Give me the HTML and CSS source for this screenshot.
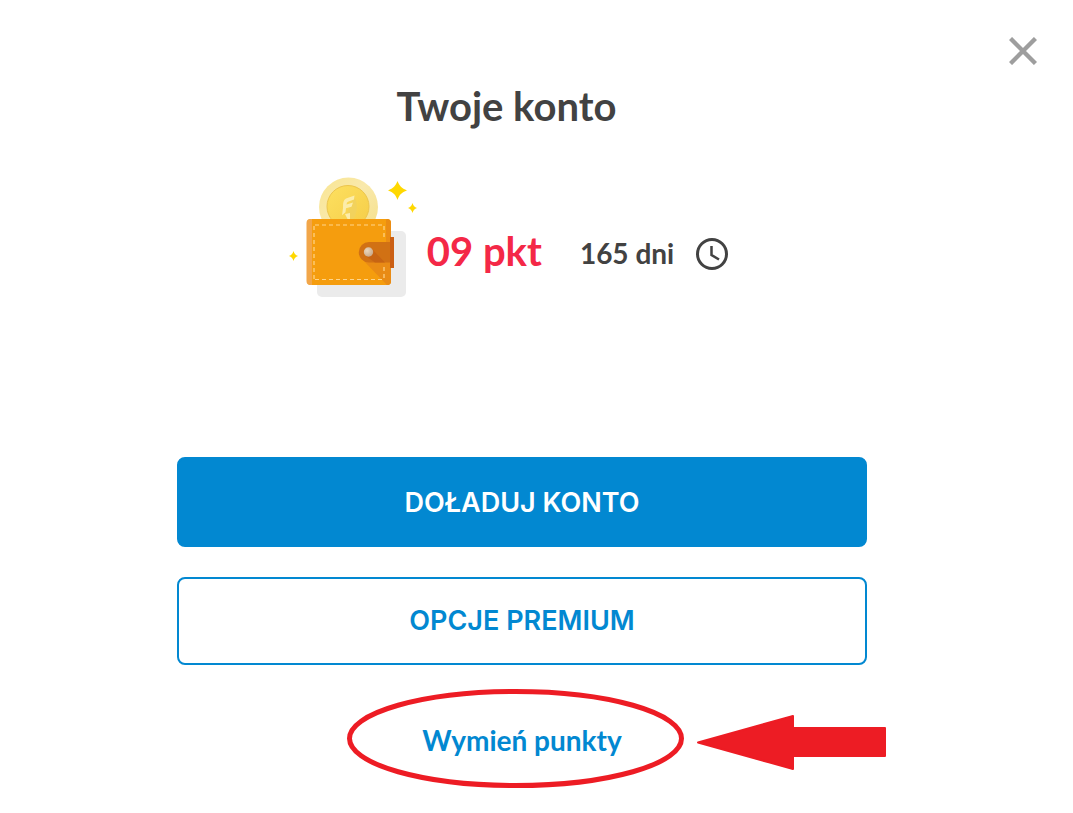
FILE: index.html
```html
<!DOCTYPE html>
<html lang="pl">
<head>
    <meta charset="UTF-8">
    <meta name="viewport" content="width=device-width, initial-scale=1.0">
    <title>Twoje konto</title>
    <link rel="stylesheet" href="styles.css">
</head>
<body>
<div class="account">
    <header class="account-header">
        <h1>Twoje konto</h1>
        <button class="close-btn" type="button" aria-label="Zamknij">
            <svg width="28" height="28" viewBox="0 0 28 28" aria-hidden="true">
                <path d="M1.5 1.5L26.5 26.5M26.5 1.5L1.5 26.5" stroke="#9e9e9e" stroke-width="4.4"/>
            </svg>
        </button>
    </header>
    <main>
        <section class="balance">
            <svg class="wallet" width="128" height="120" viewBox="289 177 128 120" aria-hidden="true">
                <defs>
                    <linearGradient id="rim" x1="0" y1="0" x2="1" y2="1">
                        <stop offset="0" stop-color="#f9e590"/>
                        <stop offset=".45" stop-color="#f9e9ac"/>
                        <stop offset="1" stop-color="#f5df86"/>
                    </linearGradient>
                    <linearGradient id="face" x1="0" y1="0" x2="1" y2="1">
                        <stop offset="0" stop-color="#fde060"/>
                        <stop offset="1" stop-color="#f5cd48"/>
                    </linearGradient>
                    <radialGradient id="stud" cx=".35" cy=".35" r=".75">
                        <stop offset="0" stop-color="#ead7bd"/>
                        <stop offset="1" stop-color="#c7a584"/>
                    </radialGradient>
                </defs>
                <rect x="317" y="231" width="89" height="66" rx="5" fill="#ebebeb"/>
                <!-- coin -->
                <circle cx="348.500" cy="207" r="29.500" fill="url(#rim)"/>
                <circle cx="348" cy="206.500" r="21" fill="url(#face)" stroke="#ecc54c" stroke-width="1"/>
                <path d="M354 196c4 7 4 16-1 24h-5l-1-7z" fill="#f2d25c"/>
                <path d="M343 208q-.5-8 3-9.500l8.500-3-.5 4-5.500 2q-2 .7-2 3l6.500-2-1.500 4.200-5.500 1.600-.5 4-3.500 3z" fill="#fcedaa"/>
                <path d="M345 214l5-1v6h-2.500z" fill="#fcedaa"/>
                <!-- wallet body -->
                <rect x="307" y="219" width="84" height="66" rx="4" fill="#f59d0e"/>
                <path d="M312 219h-1.500a4 4 0 0 0-4 4v58a4 4 0 0 0 4 4h1.500z" fill="#f2a649"/>
                <path d="M387 219a4 4 0 0 1 4 4v58a4 4 0 0 1-4 4l-1-1V220z" fill="#eb8c13"/>
                <path d="M362 259l25 26a4 4 0 0 0 4-4v-19z" fill="#e98b15"/>
                <path d="M315 225h69M315 279.500h69M314 226v53M384 226v14M384 267v12" fill="none" stroke="#ffd58a" stroke-width="1.200" stroke-dasharray="4 3"/>
                <!-- clasp -->
                <path d="M369 242h22v20.500h-22a10.200 10.200 0 0 1 0-20.500z" fill="#d17114"/>
                <path d="M372 249l13 13.500h-10l-10-7z" fill="#c76413"/>
                <rect x="390" y="237" width="4" height="31" fill="#cb5f14"/>
                <circle cx="368.500" cy="252" r="4.700" fill="url(#stud)"/>
                <!-- sparkles -->
                <path d="M397.500 181c2 5 4 7 9.500 9.500-5.500 2-7.500 4-9.500 9.500-2-5.500-4-7.500-9.500-9.500 5.500-2.500 7.500-4.500 9.500-9.500z" fill="#ffd800"/>
                <path d="M412.500 203c1 3 2 4 4.500 5-2.500 1-3.500 2-4.500 5-1-3-2-4-4.500-5 2.500-1 3.500-2 4.500-5z" fill="#ffd800"/>
                <path d="M293.500 251c1 3 2 4 4.500 5-2.500 1-3.500 2-4.500 5-1-3-2-4-4.500-5 2.500-1 3.500-2 4.500-5z" fill="#ffd800"/>
            </svg>
            <strong class="points">09 pkt</strong>
            <span class="days">165 dni</span>
            <svg class="clock" width="32" height="32" viewBox="0 0 32 32" fill="none" stroke="#424242" aria-hidden="true">
                <circle cx="16" cy="16" r="14.500" stroke-width="3"/>
                <path d="M15.500 8v9l7.500 4.500" stroke-width="2.500"/>
            </svg>
        </section>
        <section class="actions">
            <button class="btn btn-primary" type="button">DOŁADUJ KONTO</button>
            <button class="btn btn-outline" type="button">OPCJE PREMIUM</button>
            <div class="exchange">
                <a href="#">Wymień punkty</a>
                <svg class="marker" width="540" height="100" viewBox="347 688 540 100" aria-hidden="true">
                    <ellipse cx="515.500" cy="738.500" rx="166" ry="47" fill="none" stroke="#ed1c24" stroke-width="5"/>
                    <path d="M698 742.500L793 716V728H885V756H793V769z" fill="#ed1c24" stroke="#ed1c24" stroke-width="2" stroke-linejoin="round"/>
                </svg>
            </div>
        </section>
    </main>
</div>
</body>
</html>
```

FILE: styles.css
```css
body {
    margin: 0;
    background-color: #fff;
    color: #424242;
    font-family: Lato, sans-serif;
}
.account {
    min-height: 100vh;
}
.account-header {
    display: flex;
    align-items: flex-start;
    padding: 29px 28px 0 12px;
}
.account-header h1 {
    flex: 1;
    margin: 53px 0 0;
    font-size: 40px;
    line-height: 48px;
    font-weight: 700;
    text-align: center;
}
.close-btn {
    display: flex;
    align-items: center;
    justify-content: center;
    width: 44px;
    height: 44px;
    padding: 0;
    border: none;
    background: none;
    cursor: pointer;
}
.balance {
    display: flex;
    align-items: center;
    justify-content: center;
    margin-top: 47px;
    padding-right: 56px;
}
.wallet {
    flex: none;
}
.points {
    margin: 28px 38px 0 10px;
    color: #f42847;
    font-size: 40px;
    line-height: 48px;
    font-weight: 700;
}
.days {
    margin-top: 32px;
    font-size: 28px;
    line-height: 36px;
    font-weight: 700;
}
.clock {
    margin: 34px 0 0 22px;
}
.actions {
    display: flex;
    flex-direction: column;
    align-items: center;
    margin-top: 160px;
    padding-right: 29px;
}
.btn {
    width: 100%;
    max-width: 690px;
    border: 2px solid #0288d1;
    border-radius: 8px;
    font-family: Inter, sans-serif;
    font-size: 27px;
    line-height: 36px;
    font-weight: 600;
    cursor: pointer;
}
.btn-primary {
    margin-bottom: 30px;
    padding: 26px 20px 24px;
    background-color: #0288d1;
    color: #fff;
}
.btn-outline {
    padding: 24px 20px;
    background-color: #fff;
    color: #0288d1;
}
.exchange {
    position: relative;
    margin-top: 57px;
}
.exchange a {
    color: #0288d1;
    font-size: 28px;
    line-height: 36px;
    font-weight: 700;
    text-decoration: none;
}
/* hand-drawn hint around the link */
.marker {
    position: absolute;
    top: -34px;
    left: -75px;
    pointer-events: none;
}
```
